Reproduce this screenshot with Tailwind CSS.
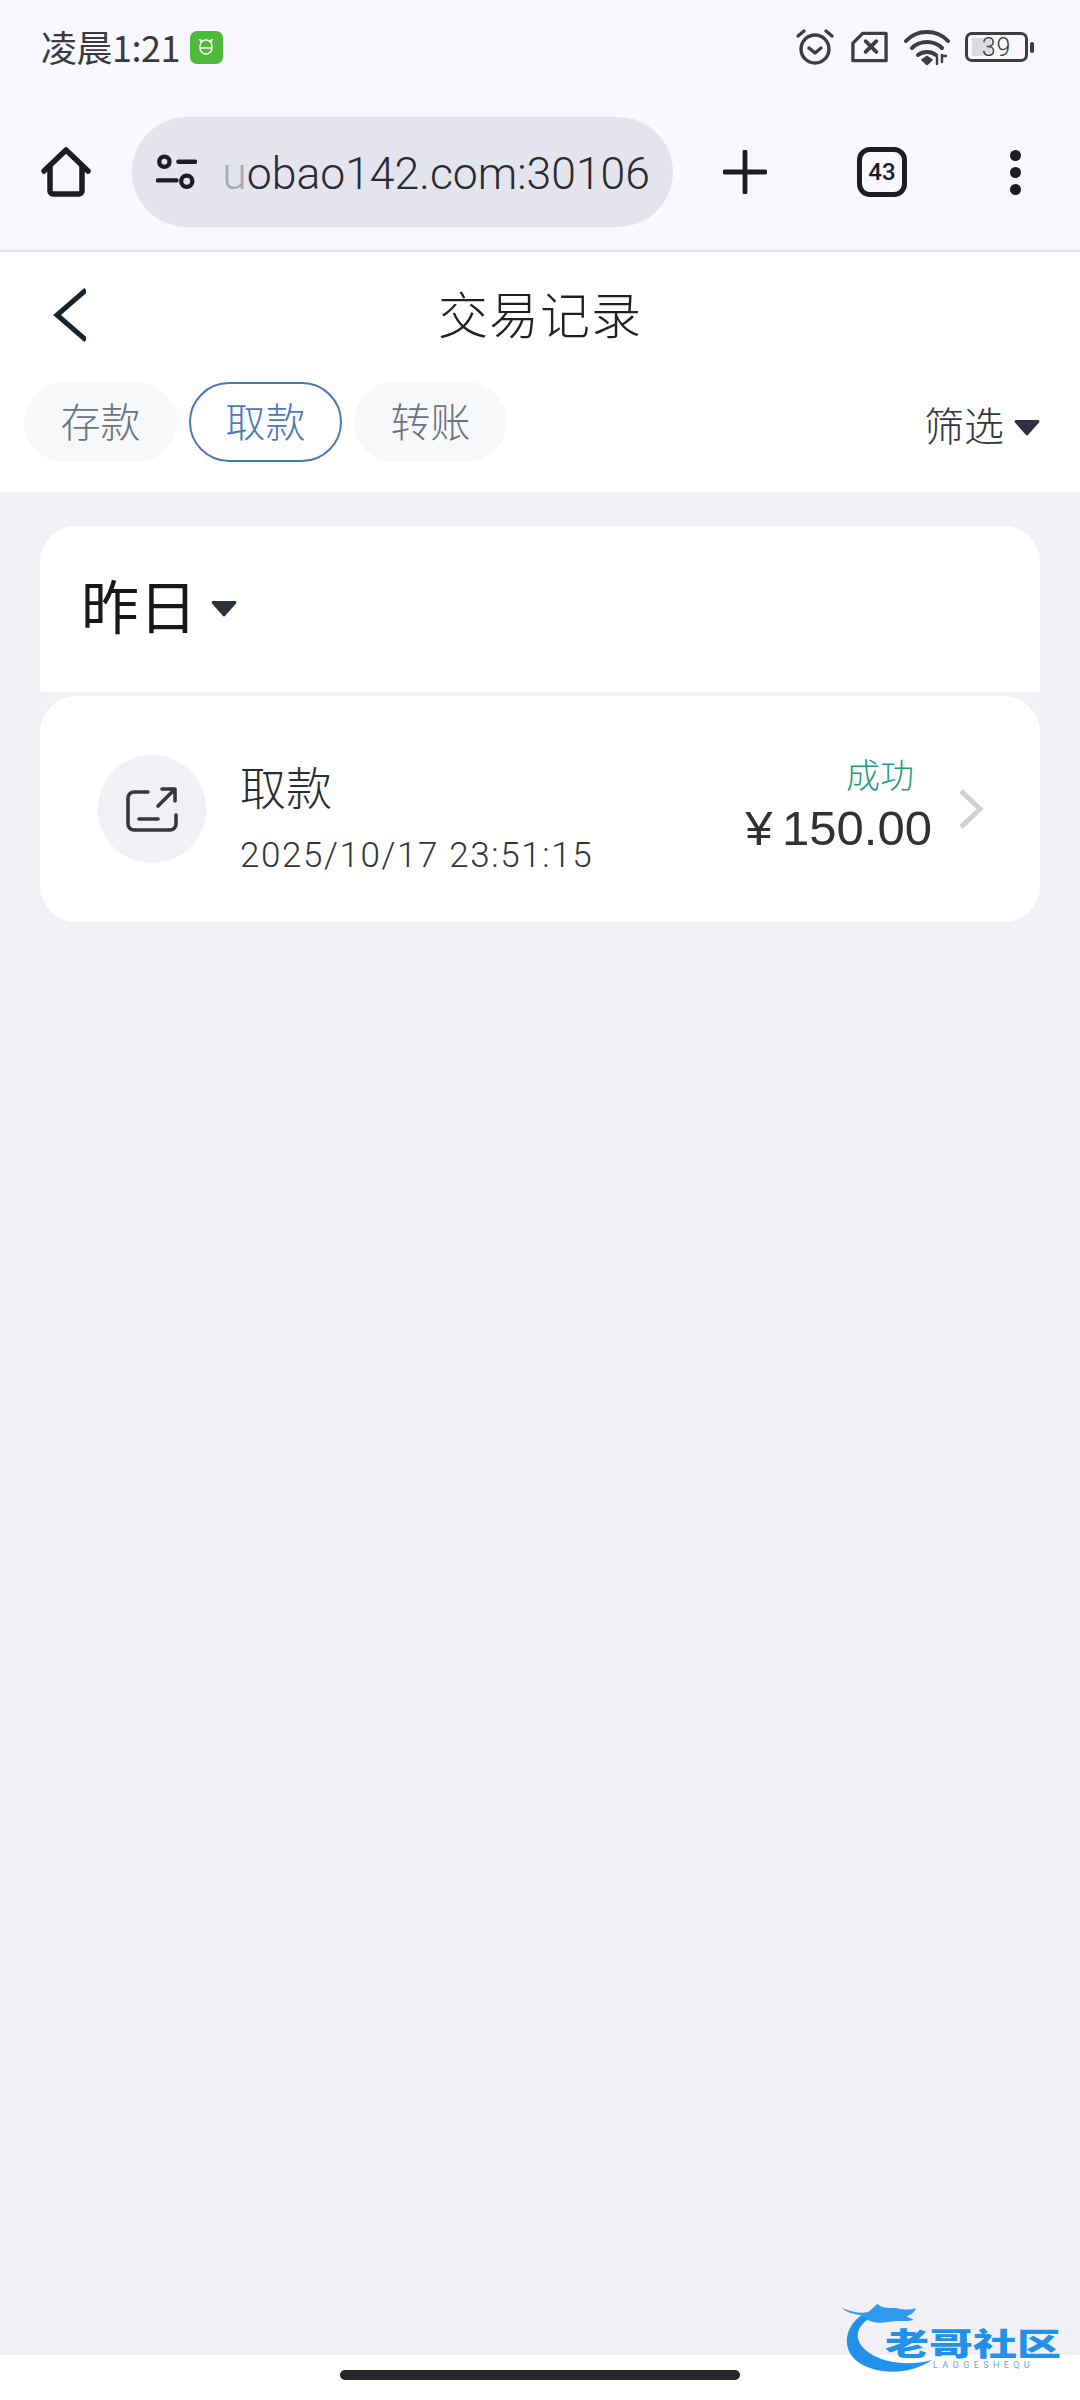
<!DOCTYPE html>
<html lang="en">
  <head>
    <meta charset="UTF-8" />
    <title>交易记录</title>
    <script src="https://cdn.jsdelivr.net/npm/@tailwindcss/browser@4"></script>
  </head>
  <body class="bg-[#f0f0f5] font-['Roboto','Noto_Sans_CJK_SC',sans-serif]">
    <div class="relative w-[1080px] h-[2400px] flex flex-col overflow-hidden">
      <!-- Browser chrome -->
      <div class="h-[252px] shrink-0 bg-[#f8f8fe] border-b-2 border-[#e2e2e8]">
        <div class="h-[94px] flex items-center justify-between pl-[41px] pr-[46px]">
          <div class="flex items-center gap-[10px]">
            <span class="mb-[3px] text-[36px] leading-[44px] text-[#3a3a40] font-['Noto_Sans_CJK_SC',sans-serif] tracking-[-0.5px]">凌晨1:21</span>
            <span class="w-[33px] h-[33px] rounded-[7px] bg-[#4fbb3a] flex items-center justify-center">
              <svg width="20" height="20" viewBox="0 0 20 20" fill="none" stroke="#fff" stroke-width="1.4"><path d="M4 9a6 6 0 0 1 12 0v2a6 6 0 0 1-12 0z"/><path d="M4 11h12"/><path d="M5 5l-1-2 3 1M15 5l1-2-3 1"/></svg>
            </span>
          </div>
          <div class="flex items-center gap-[15px]">
            <svg width="40" height="38" viewBox="0 0 40 38" fill="none" stroke="#3d3d42" stroke-width="3.4" stroke-linecap="round" stroke-linejoin="round"><circle cx="20" cy="21" r="14"/><path d="M14 20l6 5 6-5"/><path d="M3 8l6-5M37 8l-6-5"/></svg>
            <svg width="39" height="32" viewBox="0 0 40 32" fill="none" stroke="#3d3d42" stroke-width="3.4" stroke-linejoin="round" stroke-linecap="round"><path d="M13 2h24v28H3V12z"/><path d="M16 10l11 11M27 10L16 21" stroke-width="3.8"/></svg>
            <svg width="46" height="36" viewBox="0 0 46 36" fill="none" stroke="#3d3d42" stroke-width="4" stroke-linecap="round"><path d="M2 12c11-12 31-12 42 0"/><path d="M8 19c8-8 22-8 30 0"/><path d="M14 26c5-4 13-4 18 0"/><path d="M20 31l3-2 3 2-3 3z" fill="#3d3d42"/><path d="M33 28v7M38 26v7M38 27h4" stroke-width="2.4"/></svg>
            <div class="flex items-center gap-[2px]">
              <div class="relative w-[63px] h-[30px] rounded-[7px] border-[3px] border-[#3d3d42] flex items-center justify-center">
                <div class="absolute left-[4px] top-[3px] bottom-[3px] w-[19px] bg-[#dcdce0]"></div>
                <span class="relative text-[25px] leading-none font-light text-[#3a3a40] tracking-[1px]">39</span>
              </div>
              <div class="w-[4px] h-[11px] rounded-full bg-[#3d3d42]"></div>
            </div>
          </div>
        </div>
        <div class="h-[156px] flex items-center pl-[41px]">
          <svg class="shrink-0" width="50" height="50" viewBox="0 0 50 50" fill="none" stroke="#1c1c22" stroke-width="5.500" stroke-linejoin="round" stroke-linecap="round"><path d="M3 24L25 3l22 21"/><path d="M9 20v24a3 3 0 0 0 3 3h26a3 3 0 0 0 3-3V20"/></svg>
          <div class="ml-[41px] w-[541px] h-[110px] rounded-[55px] bg-[#e4e4ee] flex items-center pl-[24px] pr-[23px] shrink-0">
            <svg class="shrink-0" width="41" height="36" viewBox="0 0 44 38" fill="none" stroke="#1c1c22" stroke-width="4.6" stroke-linecap="round"><circle cx="9" cy="8" r="5.5"/><path d="M24 8h18M2 28h20"/><circle cx="33" cy="29" r="6"/></svg>
            <div class="flex-1 pt-[4px] whitespace-nowrap text-[44.500px] leading-none font-light text-[#2a2a32] text-right">
              <span class="text-[#a9a9b0]">u</span>obao142.com:30106
            </div>
          </div>
          <svg class="ml-[50px] shrink-0" width="44" height="44" viewBox="0 0 46 46" stroke="#1c1c22" stroke-width="5" stroke-linecap="round"><path d="M23 2v42M2 23h42"/></svg>
          <div class="ml-[90px] shrink-0 w-[50px] h-[50px] rounded-[13px] border-[5px] border-[#1c1c22] flex items-center justify-center text-[24px] font-medium text-[#1c1c22]">43</div>
          <div class="ml-[103px] shrink-0 flex flex-col gap-[6px]">
            <div class="w-[11px] h-[11px] rounded-full bg-[#1c1c22]"></div>
            <div class="w-[11px] h-[11px] rounded-full bg-[#1c1c22]"></div>
            <div class="w-[11px] h-[11px] rounded-full bg-[#1c1c22]"></div>
          </div>
        </div>
      </div>

      <!-- Page header -->
      <div class="h-[240px] shrink-0 bg-white">
        <div class="relative h-[130px] flex items-center justify-center">
          <svg class="absolute left-[50px] top-[36px]" width="36" height="54" viewBox="0 0 36 54" fill="none" stroke="#15232e" stroke-width="5"><path d="M36 2L7 27l29 25"/></svg>
          <span class="text-[50px] leading-none text-[#1f1f24] font-light tracking-[1px]">交易记录</span>
        </div>
        <div class="flex items-start justify-between pl-[24px] pr-[40px]">
          <div class="flex gap-[12px]">
            <span class="w-[153px] h-[80px] pt-[3px] rounded-[40px] bg-[#f7f8fa] flex items-center justify-center text-[40px] font-light text-[#6b7280]">存款</span>
            <span class="w-[153px] h-[80px] pt-[3px] rounded-[40px] border-2 border-[#4a78bd] flex items-center justify-center text-[40px] font-light text-[#4a78bd]">取款</span>
            <span class="w-[153px] h-[80px] pt-[3px] rounded-[40px] bg-[#f7f8fa] flex items-center justify-center text-[40px] font-light text-[#6b7280]">转账</span>
          </div>
          <div class="flex items-center gap-[10px] h-[80px] mt-[6px]">
            <span class="text-[40px] font-light text-[#36363d]">筛选</span>
            <svg width="26" height="18" viewBox="0 0 26 18" fill="#2f3040"><path d="M2 1h22a1.500 1.500 0 0 1 1 2.500L14 16a1.500 1.500 0 0 1-2 0L1 3.500A1.500 1.500 0 0 1 2 1z"/></svg>
          </div>
        </div>
      </div>

      <!-- Records -->
      <div class="flex-1 px-[40px] pt-[34px]">
        <div class="h-[166px] rounded-t-[36px] bg-white flex items-center pl-[41px] gap-[13px]">
          <span class="text-[58px] leading-none font-normal text-[#17171c]">昨日</span>
          <svg width="28" height="18" viewBox="0 0 26 18" fill="#2f3040"><path d="M2 1h22a1.500 1.500 0 0 1 1 2.500L14 16a1.500 1.500 0 0 1-2 0L1 3.500A1.500 1.500 0 0 1 2 1z"/></svg>
        </div>
        <div class="mt-[4px] h-[226px] rounded-[36px] bg-white flex items-center pl-[58px] pr-[56px]">
          <div class="w-[108px] h-[108px] rounded-full bg-[#f0f0f5] flex items-center justify-center shrink-0">
            <svg width="54" height="47" viewBox="0 0 54 47" fill="none" stroke="#35363f" stroke-width="3.6" stroke-linecap="round" stroke-linejoin="round"><path d="M23 6H9a6 6 0 0 0-6 6v26a6 6 0 0 0 6 6h36a6 6 0 0 0 6-6V29"/><path d="M33 20L49 4M37 3h13v12"/><path d="M14 33h19"/></svg>
          </div>
          <div class="ml-[34px] flex-1 pt-[18px]">
            <div class="text-[46px] leading-[60px] font-light text-[#2b2b30]">取款</div>
            <div class="mt-[15px] text-[35px] leading-[44px] font-light text-[#33363b] tracking-[1.600px]">2025/10/17 23:51:15</div>
          </div>
          <div class="flex flex-col items-end mb-[8px]">
            <span class="text-[34px] leading-[44px] font-light text-[#1f9e78] mr-[18px] mb-[2px]">成功</span>
            <span class="text-[49px] leading-[56px] text-[#303035] [word-spacing:-4px] font-['Liberation_Sans',sans-serif]">¥ 150.00</span>
          </div>
          <svg class="ml-[26px] shrink-0" width="26" height="40" viewBox="0 0 26 40" fill="none" stroke="#d0d0d8" stroke-width="5"><path d="M3 2l19 18L3 38"/></svg>
        </div>
      </div>

      <!-- Gesture bar -->
      <div class="h-[45px] shrink-0 bg-white flex justify-center pt-[15px]">
        <div class="w-[400px] h-[10px] rounded-full bg-[#26262b]"></div>
      </div>

      <!-- Watermark -->
      <div class="absolute left-[840px] top-[2300px] w-[230px] h-[85px]">
        <svg class="absolute left-0 top-0" width="120" height="76" viewBox="0 0 120 76" fill="none"><path d="M22 15C2 28-1 58 30 68c20 7 45 4 62-8-22 6-47 4-64-8C14 42 14 28 30 18z" fill="#2191ea"/><path d="M2 8c10 4 20 6 26 4 6-4 8-8 10-8 2 4 10 4 18 4 8 2 14 2 20 0-2 6-8 8-10 8l8 4c-8 2-18 0-26 2-10 2-20 0-26-6C18 14 8 14 2 8z" fill="#2f9bee"/></svg>
        <span class="absolute left-[45px] top-[25px] whitespace-nowrap text-[44px] leading-[34px] font-black text-[#2191ea] scale-y-[0.7] font-['Noto_Sans_CJK_SC',sans-serif]">老哥社区</span>
        <span class="absolute left-[93px] top-[60px] whitespace-nowrap text-[9px] leading-[10px] text-[#6aa9e0] tracking-[4.400px]">LAOGESHEQU</span>
      </div>
    </div>
  </body>
</html>
